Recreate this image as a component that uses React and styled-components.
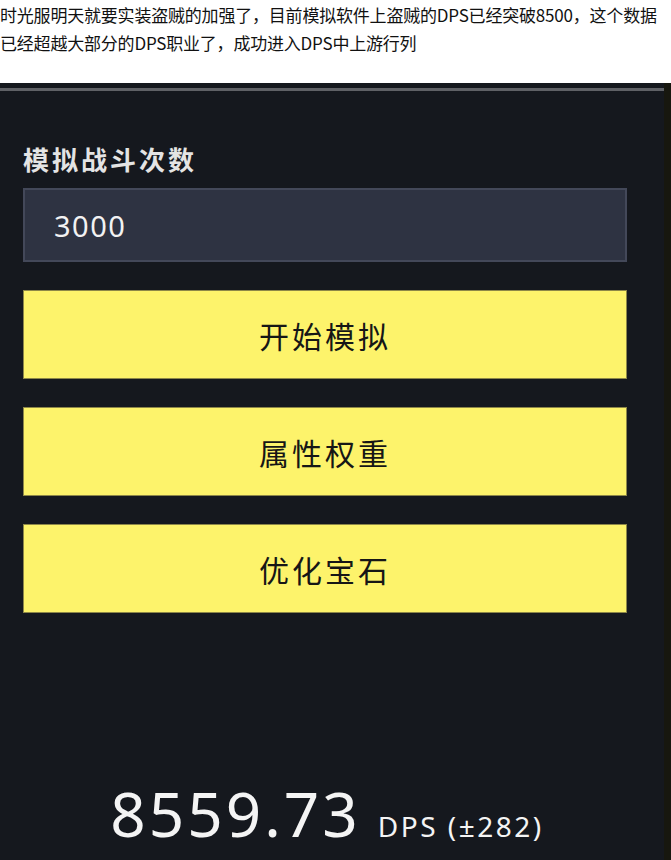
import React from 'react'
import styled, { createGlobalStyle } from 'styled-components'

const GlobalStyle = createGlobalStyle`
  html, body {
    margin: 0;
    padding: 0;
    background: #ffffff;
  }
  body {
    width: 671px;
    height: 860px;
    overflow: hidden;
  }
`

const Page = styled.div`
  display: flex;
  flex-direction: column;
  height: 860px;
`

const Caption = styled.p`
  margin: 0;
  padding-top: 1px;
  height: 82px;
  font-family: "Noto Sans CJK SC", "Liberation Sans", sans-serif;
  font-size: 17px;
  line-height: 28px;
  color: #111111;
  white-space: nowrap;
  letter-spacing: -0.2px;
`

const Panel = styled.section`
  flex: 1;
  display: flex;
  background: #15181e;
`

const Main = styled.div`
  flex: 1;
  display: flex;
  flex-direction: column;
  padding-top: 5px;
`

const Rule = styled.div`
  height: 3px;
  background: #5f6166;
`

const Strip = styled.div`
  width: 7px;
  background: #17170f;
`

const Body = styled.div`
  display: flex;
  flex-direction: column;
  padding: 0 37px 0 23px;
`

const Label = styled.div`
  margin-top: 53px;
  font-family: "Noto Sans CJK SC", sans-serif;
  font-weight: 700;
  font-size: 26px;
  line-height: 30px;
  letter-spacing: 3px;
  color: #e4e4e4;
`

const Input = styled.div`
  margin-top: 14px;
  height: 74px;
  box-sizing: border-box;
  display: flex;
  align-items: center;
  padding-left: 29px;
  background: #2e3342;
  border: 2px solid #434859;
  font-family: "Noto Sans", sans-serif;
  font-size: 29px;
  letter-spacing: 1.5px;
  color: #f2f2f2;
`

const Buttons = styled.div`
  display: flex;
  flex-direction: column;
  gap: 28px;
  margin-top: 28px;
`

const Button = styled.div`
  height: 89px;
  box-sizing: border-box;
  display: flex;
  align-items: center;
  justify-content: center;
  background: #fdf36b;
  border: 1px solid #8d8748;
  font-family: "Noto Sans CJK SC", sans-serif;
  font-size: 30px;
  letter-spacing: 3px;
  color: #161616;
`

const Result = styled.div`
  margin-top: 158px;
  display: flex;
  align-items: baseline;
  justify-content: center;
  gap: 17px;
  padding-left: 4px;
  font-family: "Noto Sans", sans-serif;
  color: #f4f4f4;
`

const Value = styled.span`
  font-size: 62px;
  letter-spacing: 3px;
`

const Unit = styled.span`
  font-size: 28px;
  letter-spacing: 2.5px;
`

export default function App () {
  return (
    <Page>
      <GlobalStyle />
      <Caption>
        时光服明天就要实装盗贼的加强了，目前模拟软件上盗贼的DPS已经突破8500，这个数据<br />
        已经超越大部分的DPS职业了，成功进入DPS中上游行列
      </Caption>
      <Panel>
        <Main>
          <Rule />
          <Body>
            <Label>模拟战斗次数</Label>
            <Input>3000</Input>
            <Buttons>
              <Button>开始模拟</Button>
              <Button>属性权重</Button>
              <Button>优化宝石</Button>
            </Buttons>
            <Result>
              <Value>8559.73</Value>
              <Unit>DPS (±282)</Unit>
            </Result>
          </Body>
        </Main>
        <Strip />
      </Panel>
    </Page>
  )
}
